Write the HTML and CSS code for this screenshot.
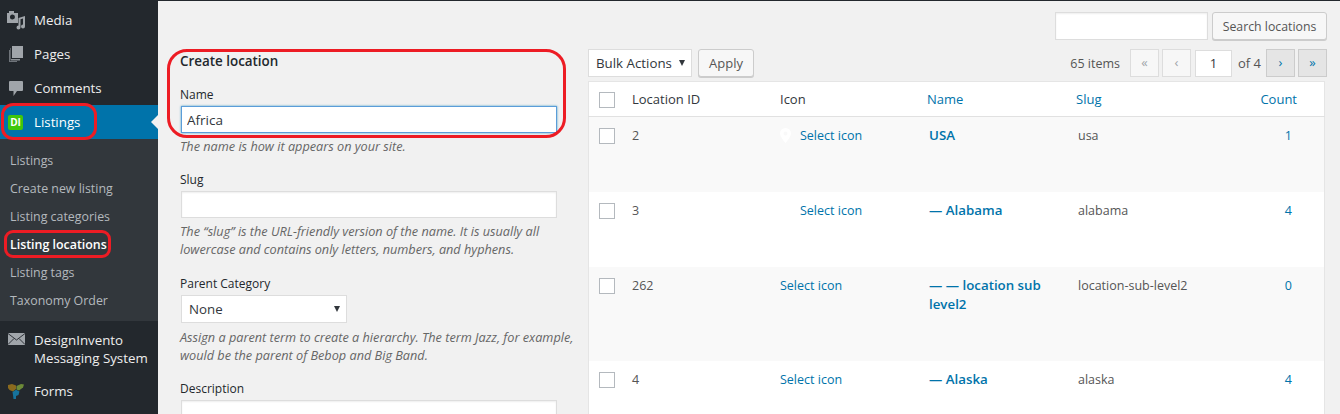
FILE: index.html
```html
<!DOCTYPE html>
<html lang="en">
<head>
  <meta charset="UTF-8" />
  <title>Listing locations</title>
  <link rel="stylesheet" href="styles.css">
</head>
<body>

  <aside class="sidebar">
    <a class="menu-item" href="#">
      <svg class="menu-icon" width="20" height="20" viewBox="0 0 20 20"><path fill="#a0a5aa" fill-rule="evenodd" d="M0 3h2V1h5v2h4v10H0zM5.500 4.500a2.500 2.500 0 1 0 0 5 2.500 2.500 0 0 0 0-5z"/><path fill="#a0a5aa" d="M11.500 8l6.500-2v10.500a2 2 0 1 1-2-2V8.500l-2.500.7v8.300a2 2 0 1 1-2-2z"/></svg>
      Media
    </a>
    <a class="menu-item" href="#">
      <svg class="menu-icon" width="20" height="20" viewBox="0 0 20 20"><path fill="#a0a5aa" d="M5 2h11v12H5z"/><path fill="#8b9095" d="M3.500 4H4v11h9v1.500H3.500z"/><path fill="#6f747a" d="M2 6h1v11h7v1H2z"/></svg>
      Pages
    </a>
    <a class="menu-item" href="#">
      <svg class="menu-icon" width="20" height="20" viewBox="0 0 20 20"><path fill="#a0a5aa" d="M3 3h12q1 0 1 1v8q0 1-1 1H10l-3.500 5V13H3q-1 0-1-1V4q0-1 1-1z"/></svg>
      Comments
    </a>
    <a class="menu-item current" href="#">
      <span class="di-badge">DI</span>
      Listings
    </a>
    <ul class="submenu">
      <li><a href="#">Listings</a></li>
      <li><a href="#">Create new listing</a></li>
      <li><a href="#">Listing categories</a></li>
      <li><a class="active" href="#">Listing locations</a></li>
      <li><a href="#">Listing tags</a></li>
      <li><a href="#">Taxonomy Order</a></li>
    </ul>
    <a class="menu-item tall" href="#">
      <svg class="menu-icon mail-icon" width="17" height="12" viewBox="0 0 17 12"><rect width="17" height="12" fill="#a0a5aa"/><path fill="none" stroke="#2f3338" stroke-width="1" d="M0 0.500l8.500 6.500 8.500-6.500M0 11.500l6-6M17 11.500l-6-6"/></svg>
      <span>DesignInvento<br>Messaging System</span>
    </a>
    <a class="menu-item" href="#">
      <svg class="menu-icon forms-icon" width="16" height="16" viewBox="0 0 16 16"><path fill="#8a6a1e" d="M0 2l4-1 4 1.500V6L5 8.500 1.500 7 0 5z"/><path fill="#6c8a38" d="M8.500 3L13 1l3 .5-1 3L11 7.500 8.500 6.500z"/><path fill="#17739b" d="M4.500 9L8 6.800l3.500 1.700-1 3.500-2.500 1V16H5.500L5 12z"/></svg>
      Forms
    </a>
  </aside>

  <main class="content">
    <div class="search-row">
      <input class="search-input" type="text" />
      <button class="btn search-btn">Search locations</button>
    </div>

    <div class="columns">
      <section class="form-col">
        <h2>Create location</h2>

        <label>Name</label>
        <input class="name-input" type="text" value="Africa" />
        <p class="hint">The name is how it appears on your site.</p>

        <label>Slug</label>
        <input type="text" />
        <p class="hint">The “slug” is the URL-friendly version of the name. It is usually all lowercase and contains only letters, numbers, and hyphens.</p>

        <label class="parent-label">Parent Category</label>
        <div class="select parent-select">None<span class="caret"></span></div>
        <p class="hint">Assign a parent term to create a hierarchy. The term Jazz, for example, would be the parent of Bebop and Big Band.</p>

        <label>Description</label>
        <textarea></textarea>
      </section>

      <section class="list-col">
        <div class="tablenav">
          <div class="select bulk-select">Bulk Actions<span class="caret"></span></div>
          <button class="btn apply">Apply</button>
          <div class="pager">
            <span class="items">65 items</span>
            <span class="page-btn off">«</span>
            <span class="page-btn off">‹</span>
            <span class="page-current">1</span>
            <span class="page-of">of 4</span>
            <a class="page-btn" href="#">›</a>
            <a class="page-btn" href="#">»</a>
          </div>
        </div>

        <table class="locations">
          <thead>
            <tr>
              <th class="col-check"><span class="checkbox"></span></th>
              <th class="col-id">Location ID</th>
              <th class="col-icon">Icon</th>
              <th class="col-name"><a href="#">Name</a></th>
              <th class="col-slug"><a href="#">Slug</a></th>
              <th class="col-count"><a href="#">Count</a></th>
            </tr>
          </thead>
          <tbody>
            <tr class="row-short alt">
              <td><span class="checkbox"></span></td>
              <td>2</td>
              <td class="icon-cell">
                <svg class="pin" width="11" height="15" viewBox="0 0 11 15"><path fill="#fff" d="M5.500 0A5.500 5.500 0 0 0 0 5.500C0 9 5.500 15 5.500 15S11 9 11 5.500A5.500 5.500 0 0 0 5.500 0zm0 7.500a2 2 0 1 1 0-4 2 2 0 0 1 0 4z"/></svg>
                <a class="shifted" href="#">Select icon</a>
              </td>
              <td><a class="term" href="#">USA</a></td>
              <td class="slug">usa</td>
              <td class="count"><a href="#">1</a></td>
            </tr>
            <tr class="row-short">
              <td><span class="checkbox"></span></td>
              <td>3</td>
              <td class="icon-cell"><a class="shifted" href="#">Select icon</a></td>
              <td><a class="term" href="#">— Alabama</a></td>
              <td class="slug">alabama</td>
              <td class="count"><a href="#">4</a></td>
            </tr>
            <tr class="alt">
              <td><span class="checkbox"></span></td>
              <td>262</td>
              <td><a href="#">Select icon</a></td>
              <td><a class="term" href="#">— — location sub level2</a></td>
              <td class="slug">location-sub-level2</td>
              <td class="count"><a href="#">0</a></td>
            </tr>
            <tr class="row-short">
              <td><span class="checkbox"></span></td>
              <td>4</td>
              <td><a href="#">Select icon</a></td>
              <td><a class="term" href="#">— Alaska</a></td>
              <td class="slug">alaska</td>
              <td class="count"><a href="#">4</a></td>
            </tr>
          </tbody>
        </table>
      </section>
    </div>
  </main>

  <!-- red marks drawn over the screenshot -->
  <div class="mark mark-listings"></div>
  <div class="mark mark-locations"></div>
  <div class="mark mark-form"></div>

</body>
</html>
```

FILE: styles.css
```css
html, body {
  height: 414px;
  overflow: hidden;
}

body {
  margin: 0;
  display: flex;
  position: relative;
  font-family: "Open Sans", sans-serif;
  font-size: 13px;
  color: #444;
  background-color: #f1f1f1;
  border-top: 1px solid #23282d;
  box-sizing: border-box;
}

a {
  color: #0073aa;
  text-decoration: none;
}

/* sidebar */
.sidebar {
  width: 158px;
  flex-shrink: 0;
  background-color: #23282d;
  padding-top: 2px;
}

.menu-item {
  display: flex;
  align-items: center;
  height: 34px;
  padding-left: 34px;
  position: relative;
  color: #eee;
  font-size: 13.3px;
}

.menu-icon {
  position: absolute;
  left: 7px;
  top: 7px;
}

.menu-item.current {
  background-color: #0073aa;
  color: #fff;
}

.menu-item.current::after {
  content: "";
  position: absolute;
  right: 0;
  top: 10px;
  border: 7px solid transparent;
  border-right-color: #f1f1f1;
  border-left-width: 0;
}

.di-badge {
  position: absolute;
  left: 8px;
  top: 10px;
  width: 15px;
  height: 15px;
  border-radius: 2px;
  background-color: #3fc70b;
  color: #fff;
  font-size: 10px;
  font-weight: bold;
  line-height: 15px;
  text-align: center;
}

.menu-item.tall {
  box-sizing: border-box;
  height: 53px;
  padding-top: 3px;
  line-height: 18px;
}

.menu-item .mail-icon {
  left: 8px;
  top: 12px;
}

.menu-item .forms-icon {
  left: 8px;
  top: 9px;
}

.submenu {
  list-style: none;
  margin: 0;
  padding: 8px 0 6px;
  background-color: #32373c;
}

.submenu a {
  display: block;
  height: 28px;
  line-height: 28px;
  padding-left: 10px;
  color: #b4b9be;
  font-size: 12.4px;
}

.submenu a.active {
  color: #fff;
  font-weight: 600;
}

/* main area */
.content {
  flex: 1;
  padding: 11px 13px 0 22px;
  min-width: 0;
}

.search-row {
  display: flex;
  justify-content: flex-end;
  gap: 4px;
}

.search-input {
  width: 153px;
  height: 28px;
  box-sizing: border-box;
  margin: 0;
}

input, textarea {
  border: 1px solid #ddd;
  background-color: #fff;
  box-shadow: inset 0 1px 2px rgba(0,0,0,0.07);
  outline: none;
  font-family: inherit;
}

.btn {
  height: 28px;
  padding: 0 10px;
  border: 1px solid #ccc;
  border-radius: 3px;
  background-color: #f7f7f7;
  box-shadow: 0 1px 0 #ccc;
  color: #555;
  font-family: inherit;
  font-size: 13px;
}

.search-btn {
  width: 115px;
  padding: 0;
  font-size: 12.3px;
}

.columns {
  display: flex;
  gap: 12px;
}

/* add form */
.form-col {
  width: 396px;
  flex-shrink: 0;
  padding-top: 12px;
}

.form-col h2 {
  margin: 0 0 16px;
  font-size: 13.4px;
  line-height: 18px;
  font-weight: 600;
  color: #23282d;
}

.form-col label {
  display: block;
  line-height: 18px;
  margin-bottom: 2px;
  color: #23282d;
  font-size: 12px;
}

.form-col .parent-label {
  padding-top: 1px;
}

.form-col input, .form-col textarea {
  display: block;
  width: 376px;
  margin-left: 1px;
  height: 27px;
  box-sizing: border-box;
  padding: 3px 5px;
  font-size: 13.5px;
  color: #32373c;
}

.form-col textarea {
  height: 60px;
  resize: none;
}

.form-col .name-input {
  border-color: #5b9dd9;
  box-shadow: 0 0 2px rgba(30,140,190,0.8);
}

.hint {
  margin: 4px 0 15px;
  font-size: 12.7px;
  font-style: italic;
  line-height: 18.5px;
  color: #666;
}

.select {
  position: relative;
  box-sizing: border-box;
  height: 28px;
  line-height: 26px;
  padding-left: 7px;
  border: 1px solid #ddd;
  background-color: #fff;
  color: #32373c;
  font-size: 13.3px;
}

.caret {
  position: absolute;
  right: 6px;
  top: 10px;
  border: 3px solid transparent;
  border-top: 6px solid #32373c;
  border-bottom-width: 0;
}

.parent-select {
  width: 166px;
  margin: 0 0 5px 1px;
}

.bulk-select {
  width: 104px;
}

/* table column */
.list-col {
  flex: 1;
  min-width: 0;
}

.tablenav {
  display: flex;
  align-items: center;
  gap: 6px;
  height: 28px;
  margin: 9px 0 4px;
}

.pager {
  margin-left: auto;
  display: flex;
  align-items: center;
  gap: 3px;
  font-size: 12.5px;
  color: #555;
}

.items {
  margin-right: 7px;
}

.page-btn {
  box-sizing: border-box;
  width: 29px;
  height: 28px;
  line-height: 24px;
  text-align: center;
  border: 1px solid #ccc;
  background-color: #e5e5e5;
  font-size: 13px;
  color: #0073aa;
}

.page-btn.off {
  background-color: #f7f7f7;
  border-color: #ddd;
  color: #a0a5aa;
}

.page-current {
  box-sizing: border-box;
  width: 37px;
  height: 27px;
  margin-left: 1px;
  line-height: 25px;
  text-align: center;
  font-size: 13px;
  border: 1px solid #ddd;
  background-color: #fff;
  color: #32373c;
}

.page-of {
  margin: 0 2px 0 3px;
  font-size: 13px;
}

.locations {
  width: 737px;
  table-layout: fixed;
  border-collapse: collapse;
  border: 1px solid #e5e5e5;
  background-color: #fff;
  font-size: 12.5px;
}

.locations th {
  height: 34px;
  padding: 0 10px;
  text-align: left;
  font-weight: normal;
  font-size: 13px;
  color: #32373c;
  border-bottom: 1px solid #e1e1e1;
}

.locations td {
  padding: 9px 10px 0;
  vertical-align: top;
  line-height: 19px;
  color: #555;
}

.col-check { width: 13px; }
.col-id { width: 128px; }
.col-icon { width: 127px; }
.col-name { width: 129px; }
.col-slug { width: 124px; }

.locations .col-count {
  text-align: right;
  padding-right: 27px;
}

.locations .slug {
  padding-left: 12px;
}

.locations .count {
  text-align: right;
  padding-right: 32px;
}

.locations tr.alt td {
  background-color: #f9f9f9;
}

.row-short td {
  height: 66px;
}

.locations tr:not(.row-short) td {
  height: 85px;
}

.checkbox {
  display: block;
  width: 16px;
  height: 16px;
  box-sizing: border-box;
  border: 1px solid #b4b9be;
  background-color: #fff;
  margin-top: 2px;
}

.icon-cell {
  position: relative;
}

.pin {
  position: absolute;
  left: 10px;
  top: 11px;
}

.shifted {
  margin-left: 20px;
}

.term {
  display: inline-block;
  margin-left: 2px;
  font-size: 13.3px;
  font-weight: 600;
}

/* red marks drawn over the screenshot */
.mark {
  position: absolute;
  border: 3px solid #ed1c24;
  box-sizing: border-box;
  pointer-events: none;
}

.mark-listings {
  left: 1px;
  top: 102px;
  width: 96px;
  height: 37px;
  border-radius: 12px;
}

.mark-locations {
  left: 4px;
  top: 229px;
  width: 107px;
  height: 28px;
  border-radius: 9px;
}

.mark-form {
  left: 167px;
  top: 48px;
  width: 399px;
  height: 89px;
  border-radius: 20px;
}
```
